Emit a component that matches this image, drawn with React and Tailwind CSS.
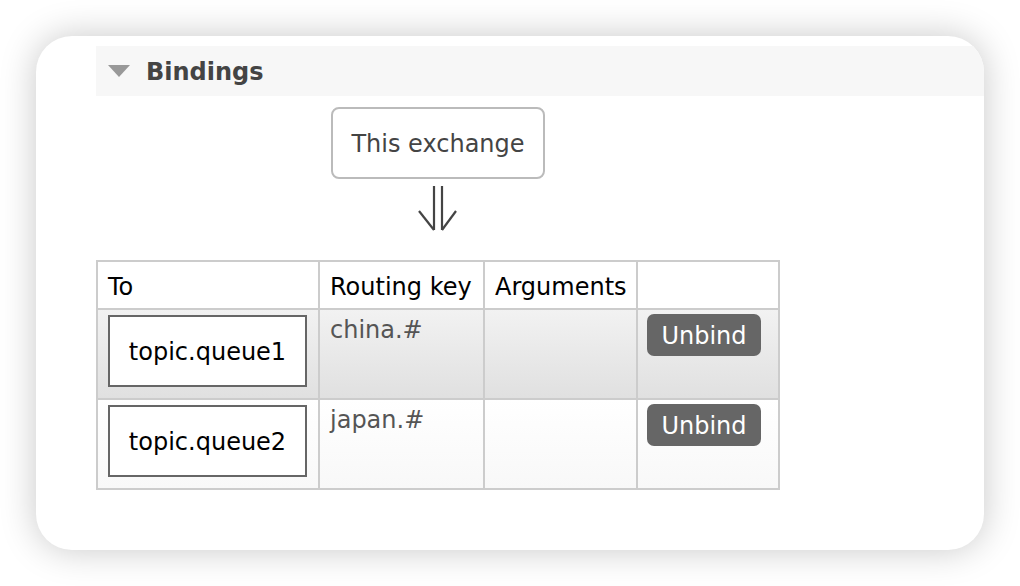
const font = { fontFamily: '"DejaVu Sans", Verdana, sans-serif' };

function QueueBox({ name }) {
  return (
    <div className="w-[199px] h-[72px] border-2 border-[#666] bg-white flex items-center justify-center pt-[2px] text-[24px] text-black">
      {name}
    </div>
  );
}

function UnbindButton() {
  return (
    <button className="w-[114px] h-[42px] rounded-[7px] bg-[#666] text-white text-[24px] leading-none flex items-center justify-center pt-[1px]">
      Unbind
    </button>
  );
}

function DoubleArrow() {
  return (
    <svg width="40" height="48" viewBox="0 0 40 48" fill="none" stroke="#444" strokeWidth="2.2">
      <path d="M16 2 V46" />
      <path d="M24 2 V46" />
      <path d="M1 27 L16 46" />
      <path d="M24 46 L38 27" />
    </svg>
  );
}

const bindings = [
  { queue: "topic.queue1", key: "china.#", rowClass: "bg-gradient-to-b from-[#f2f2f2] to-[#e0e0e0]" },
  { queue: "topic.queue2", key: "japan.#", rowClass: "bg-gradient-to-b from-white to-[#f8f8f8]" },
];

export default function App() {
  return (
    <div className="w-[1020px] h-[586px] bg-white p-[36px]" style={font}>
      <div className="w-[948px] h-[514px] bg-white rounded-[36px] overflow-hidden shadow-[0_0_36px_rgba(0,0,0,0.22)] pt-[10px]">
        <div className="ml-[60px] h-[50px] bg-[#f7f7f7] flex items-center pl-[12px]">
          <svg width="22" height="12" viewBox="0 0 22 12">
            <path d="M0 0 H22 L11 12 Z" fill="#999" />
          </svg>
          <span className="ml-[16px] pt-[1px] text-[24px] font-bold text-[#444]">Bindings</span>
        </div>

        <div className="ml-[61px] w-[682px] flex flex-col items-center">
          <div className="mt-[11px] w-[214px] h-[72px] border-2 border-[#bbb] rounded-[8px] flex items-center justify-center pt-[2px] text-[24px] text-[#444]">
            This exchange
          </div>
          <div className="mt-[5px] h-[49px] flex items-start">
            <DoubleArrow />
          </div>
          <table className="mt-[27px] w-[682px] border-collapse border-2 border-[#ccc] text-[24px] table-fixed">
            <colgroup>
              <col className="w-[222px]" />
              <col className="w-[165px]" />
              <col className="w-[153px]" />
              <col className="w-[142px]" />
            </colgroup>
            <thead>
              <tr className="h-[48px] bg-white text-black">
                <th className="border-2 border-[#ccc] text-left font-normal px-[10px] pt-[3px]">To</th>
                <th className="border-2 border-[#ccc] text-left font-normal px-[10px] pt-[3px]">Routing key</th>
                <th className="border-2 border-[#ccc] text-left font-normal px-[10px] pt-[3px]">Arguments</th>
                <th className="border-2 border-[#ccc]"></th>
              </tr>
            </thead>
            <tbody>
              {bindings.map((b) => (
                <tr key={b.queue} className={"h-[90px] " + b.rowClass}>
                  <td className="border-2 border-[#ccc] align-top pt-[5px] pl-[10px]">
                    <QueueBox name={b.queue} />
                  </td>
                  <td className="border-2 border-[#ccc] align-top pt-[5px] pl-[10px] text-[#555] leading-[30px]">
                    {b.key}
                  </td>
                  <td className="border-2 border-[#ccc]"></td>
                  <td className="border-2 border-[#ccc] align-top pt-[4px] pl-[9px]">
                    <UnbindButton />
                  </td>
                </tr>
              ))}
            </tbody>
          </table>
        </div>
      </div>
    </div>
  );
}
